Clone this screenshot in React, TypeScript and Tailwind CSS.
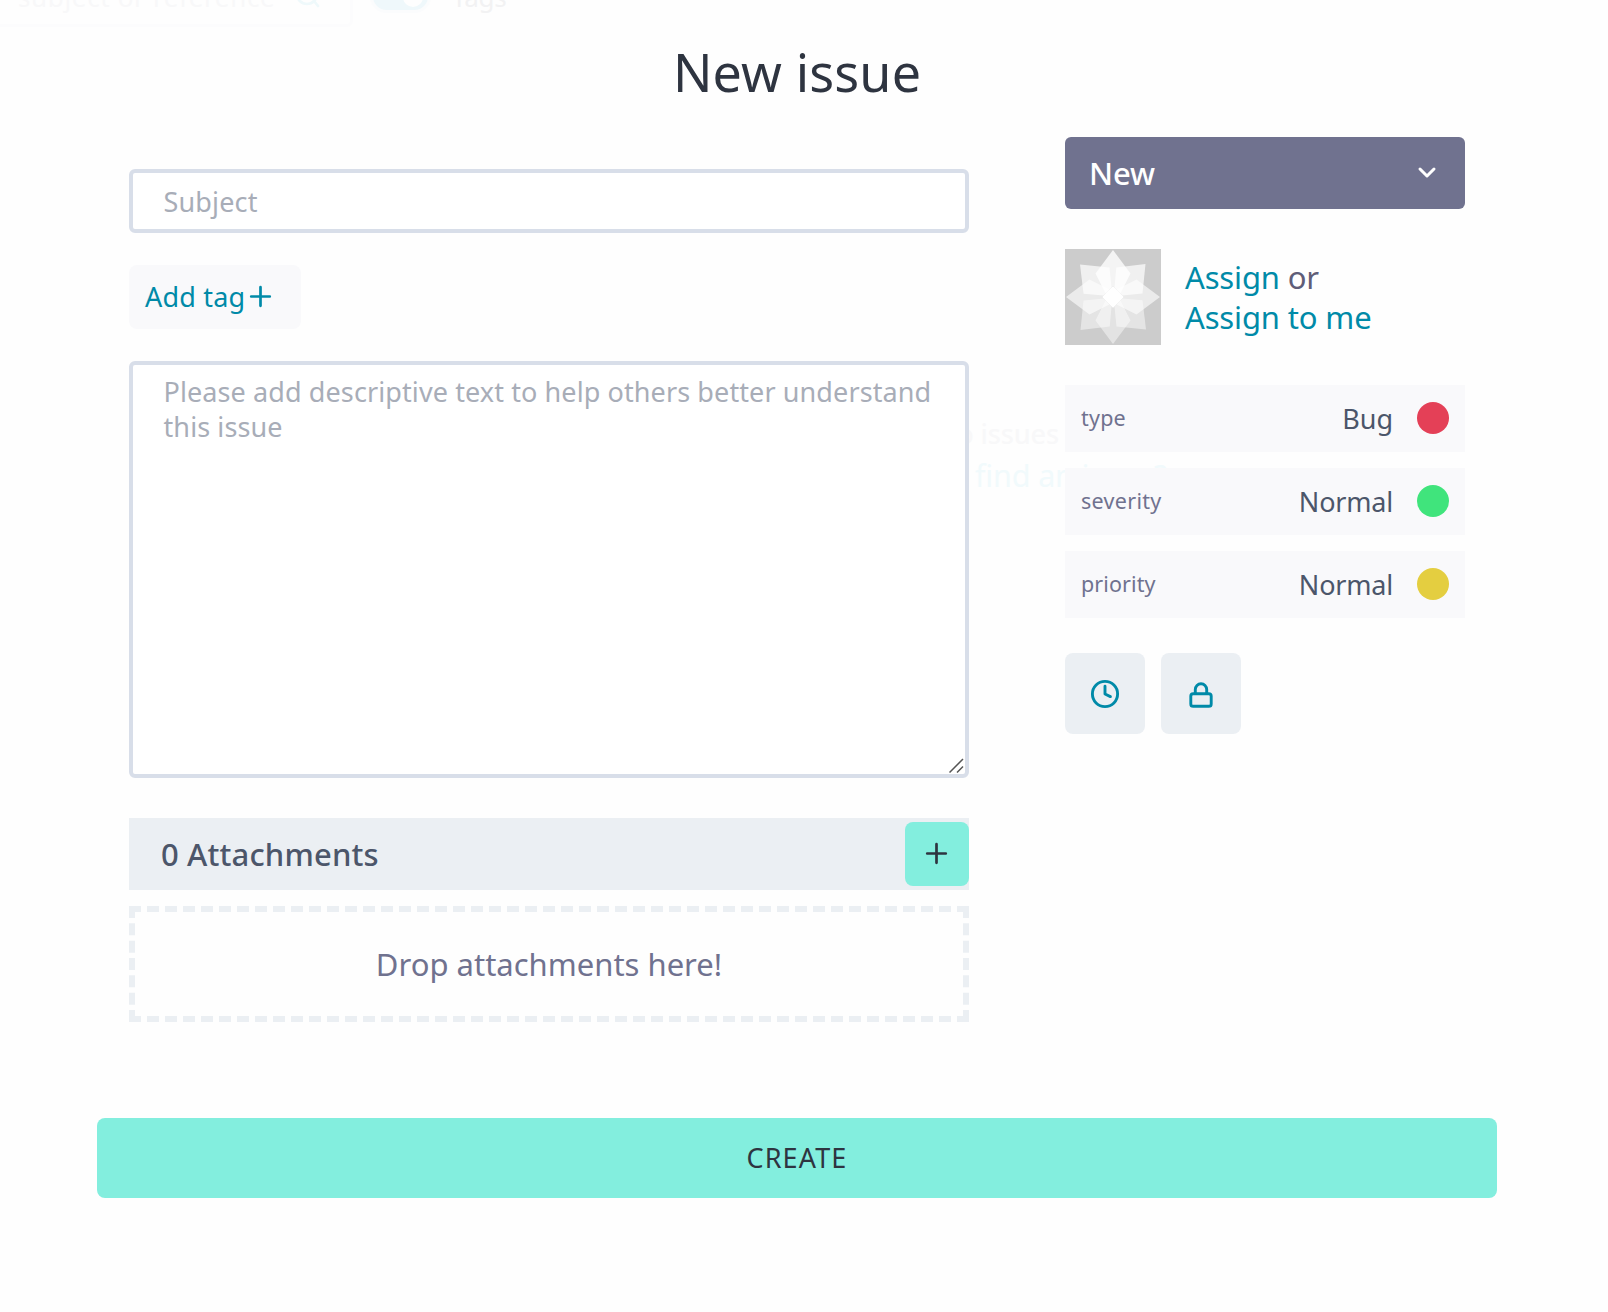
import type { ReactNode } from "react";

const AXIS_PETAL = "M48 1 L65.5 24.5 L55.4 44.4 L48 37 L40.6 44.4 L30.5 24.5 Z";
const DIAGONAL_PETAL = "M80.5 15 L77.5 44.5 L57.5 46.5 L49.5 38.5 L51.3 18.5 Z";

const PETALS = [
  { shape: DIAGONAL_PETAL, angle: 0, opacity: 0.7 },
  { shape: DIAGONAL_PETAL, angle: 90, opacity: 0.48 },
  { shape: DIAGONAL_PETAL, angle: 180, opacity: 0.48 },
  { shape: DIAGONAL_PETAL, angle: 270, opacity: 0.7 },
  { shape: AXIS_PETAL, angle: 180, opacity: 0.46 },
  { shape: AXIS_PETAL, angle: 90, opacity: 0.6 },
  { shape: AXIS_PETAL, angle: 270, opacity: 0.6 },
  { shape: AXIS_PETAL, angle: 0, opacity: 0.78 },
];

function Avatar() {
  return (
    <svg width="96" height="96" viewBox="0 0 96 96" className="shrink-0 bg-[#cccccc]">
      {PETALS.map(({ shape, angle, opacity }, i) => (
        <path key={i} d={shape} fill="#fff" fillOpacity={opacity} transform={`rotate(${angle} 48 48)`} />
      ))}
      <path d="M48 37 L59 48 L48 59 L37 48 Z" fill="#fff" />
    </svg>
  );
}

function Plus() {
  return (
    <svg width="24" height="24" viewBox="0 0 24 24" fill="none" stroke="currentColor" strokeWidth="2.7" strokeLinecap="round">
      <path d="M11.5 2.2V20.8M2.2 11.5H20.8" />
    </svg>
  );
}

const FIELDS = [
  { label: "type", value: "Bug", labelClass: "tracking-[0.2px]", valueClass: "tracking-[0px]", dot: "bg-[#e44057]" },
  { label: "severity", value: "Normal", labelClass: "tracking-[0.3px]", valueClass: "tracking-[-0.2px]", dot: "bg-[#40e47c]" },
  { label: "priority", value: "Normal", labelClass: "tracking-[0.1px]", valueClass: "tracking-[-0.2px]", dot: "bg-[#e4ce40]" },
];

function SquareButton({ label, children }: { label: string; children: ReactNode }) {
  return (
    <button aria-label={label} className="flex h-[81px] w-20 items-center justify-center rounded-lg bg-[#ebeff3] pb-px text-[#008aa8]">
      {children}
    </button>
  );
}

function Backdrop() {
  return (
    <div aria-hidden="true" className="pointer-events-none absolute inset-0 overflow-hidden text-[27px] leading-10">
      <div className="absolute -top-10 -left-2 h-[67px] w-[361px] rounded-md border-[3px] border-[#fcfcfd]" />
      <span className="absolute top-[-23px] left-[18px] text-[26px] tracking-[0.65px] whitespace-nowrap text-[#f8f8f9]">
        subject or reference
      </span>
      <svg className="absolute -top-5 left-[294px]" width="28" height="28" viewBox="0 0 28 28" fill="none" stroke="#eff9fb" strokeWidth="2.7" strokeLinecap="round">
        <circle cx="13" cy="14" r="10" />
        <path d="M20 21l4 5" />
      </svg>
      <div className="absolute -top-5 left-[370px] flex h-[33px] w-[61px] items-center justify-end rounded-full border-[3px] border-[#fbfcfd] bg-[#eff8fb] pr-[5px]">
        <div className="size-5 rounded-full bg-[#fefefe]" />
      </div>
      <span className="absolute top-[-23px] left-[452px] text-[26px] tracking-[-0.2px] text-[#f2f2f3]">Tags</span>
      <span className="absolute top-[414px] right-[549px] font-medium tracking-[-0.1px] whitespace-nowrap text-[#f8f8f9]">No issues</span>
      <span className="absolute top-[455px] left-[975px] text-[30.5px] tracking-[-0.15px] whitespace-nowrap text-[#f1fafc]">
        find an issue?
      </span>
    </div>
  );
}

export default function App() {
  return (
    <div className="relative min-h-[1312px] w-[1608px] overflow-hidden bg-[#fefefe] font-['Noto_Sans',sans-serif]">
      <Backdrop />
      <main className="relative ml-[97px] w-[1400px] pt-[42px]">
        <h1 className="h-[60px] text-center text-[52px] leading-[60px] tracking-[0.15px] text-[#2e3440]">New issue</h1>

        <div className="mt-[35px] flex justify-between px-8">
          <section className="mt-8 flex w-[840px] flex-col">
            <input
              placeholder="Subject"
              className="h-16 rounded-md border-4 border-[#d8dee9] bg-white pl-[30.5px] text-[27px] tracking-[0.15px] outline-none placeholder:text-[#a8adb8]"
            />

            <button className="mt-8 flex h-16 w-[172px] items-center gap-1 rounded-lg bg-[#f9f9fb] pl-4 text-[27px] tracking-[0.2px] text-[#008aa8]">
              <span>Add tag</span>
              <Plus />
            </button>

            <div className="relative mt-8 h-[417px]">
              <textarea
                placeholder="Please add descriptive text to help others better understand this issue"
                className="block h-full w-full resize-none rounded-md border-4 border-[#d8dee9] bg-white pt-[9px] pr-6 pl-[30.5px] text-[27px] leading-[35px] tracking-[0.1px] outline-none placeholder:text-[#a8adb8]"
              />
              <svg className="absolute right-[5px] bottom-[5px]" width="15" height="15" viewBox="0 0 15 15" stroke="#555" strokeWidth="1.5">
                <path d="M0.5 14.5L14 1M8 14.5L14 8.5" />
              </svg>
            </div>

            <div className="mt-10 flex h-[72px] items-center justify-between bg-[#ebeff3] pl-8">
              <h2 className="text-[31px] font-medium tracking-[0.15px] text-[#4c566a]">0 Attachments</h2>
              <button aria-label="Add attachment" className="flex size-16 items-center justify-center rounded-lg bg-[#83eede] text-[#2e3440]">
                <Plus />
              </button>
            </div>

            <div className="mt-4 flex h-[116px] items-center justify-center border-[6px] border-dashed border-[#ebeff3] text-[31px] text-[#70728f]">
              Drop attachments here!
            </div>
          </section>

          <aside className="w-[400px]">
            <button className="flex h-[72px] w-full items-center justify-between rounded-md bg-[#70728f] pr-[28.5px] pl-6 text-[31px] font-medium tracking-[-0.1px] text-white">
              New
              <svg width="20" height="14" viewBox="0 0 20 14" fill="none" stroke="currentColor" strokeWidth="3" strokeLinecap="round" strokeLinejoin="round">
                <path d="M3 3L10 10L17 3" />
              </svg>
            </button>

            <div className="mt-10 flex items-center gap-6">
              <Avatar />
              <p className="text-[31px] leading-10 tracking-[-0.15px] text-[#5f5d78]">
                <a className="text-[#008aa8]">Assign</a> or
                <br />
                <a className="text-[#008aa8]">Assign to me</a>
              </p>
            </div>

            <div className="mt-10 flex flex-col gap-4">
              {FIELDS.map((field) => (
                <div key={field.label} className="flex h-[67px] items-center bg-[#f9f9fb] px-4">
                  <span className={`text-[21.5px] text-[#70728f] ${field.labelClass}`}>{field.label}</span>
                  <span className={`ml-auto pt-0.5 text-[27px] text-[#4c566a] ${field.valueClass}`}>{field.value}</span>
                  <span className={`mb-0.5 ml-6 size-8 rounded-full ${field.dot}`} />
                </div>
              ))}
            </div>

            <div className="mt-[35px] flex gap-4">
              <SquareButton label="Set due date">
                <svg width="32" height="32" viewBox="0 0 32 32" fill="none" stroke="currentColor" strokeWidth="2.9" strokeLinecap="round" strokeLinejoin="round">
                  <circle cx="16" cy="17" r="12.6" />
                  <path d="M16 9.3V17L21.4 19.6" />
                </svg>
              </SquareButton>
              <SquareButton label="Lock">
                <svg width="32" height="32" viewBox="0 0 32 32" fill="none" stroke="currentColor" strokeWidth="2.9" strokeLinecap="round" strokeLinejoin="round">
                  <rect x="5.8" y="16.7" width="20.4" height="12.6" rx="2.4" />
                  <path d="M10.3 16.5V12.5A5.7 5.7 0 0 1 21.7 12.5V16.5" />
                </svg>
              </SquareButton>
            </div>
          </aside>
        </div>

        <button className="mt-24 flex h-20 w-full items-center justify-center rounded-lg bg-[#83eede] text-[27px] tracking-[1.1px] text-[#2e3440]">
          CREATE
        </button>
      </main>
    </div>
  );
}
